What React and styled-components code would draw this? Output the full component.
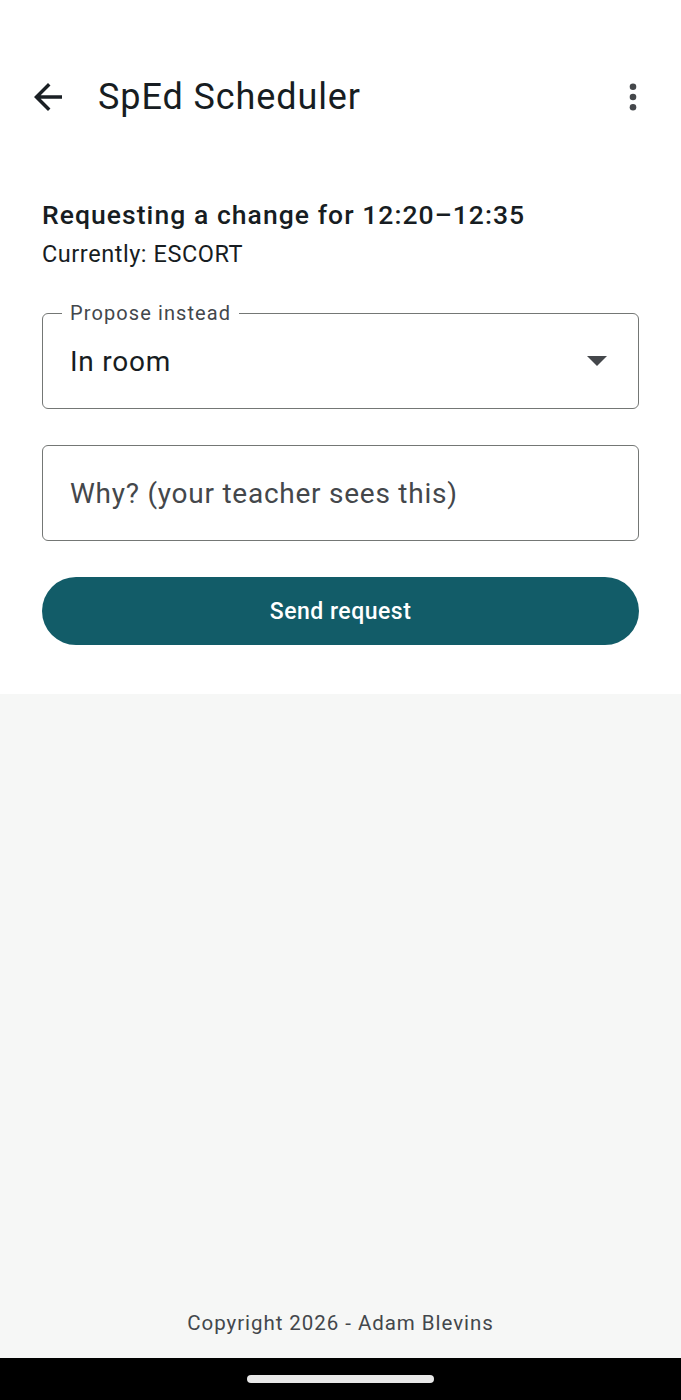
import React from "react";
import styled, { createGlobalStyle } from "styled-components";

const Global = createGlobalStyle`
  html, body { margin: 0; padding: 0; }
  body { font-family: Roboto, "Noto Sans", sans-serif; background: #fff; }
  * { box-sizing: border-box; }
`;

const Screen = styled.div`
  display: flex;
  flex-direction: column;
  height: 1400px;
  background: #ffffff;
`;

const StatusSpace = styled.div`
  height: 50px;
`;

const AppBar = styled.header`
  display: flex;
  align-items: center;
  height: 94px;
  padding: 0 26px 0 26px;
`;

const IconButton = styled.button`
  display: flex;
  align-items: center;
  justify-content: center;
  width: 44px;
  height: 44px;
  padding: 0;
  border: none;
  background: transparent;
  color: #1a1f24;
`;

const Title = styled.h1`
  flex: 1;
  margin: 0 0 0 28px;
  font-family: Roboto, sans-serif;
  font-weight: 400;
  font-size: 36px;
  color: #171d22;
  letter-spacing: 0.9px;
`;

const Content = styled.main`
  display: flex;
  flex-direction: column;
  padding: 55px 42px 49px 42px;
  background: #fff;
`;

const Heading = styled.h2`
  margin: 0;
  font-weight: 500;
  font-size: 26.5px;
  line-height: 32px;
  color: #171d22;
  letter-spacing: 1.05px;
`;

const Sub = styled.p`
  margin: 8px 0 0;
  font-size: 23.5px;
  line-height: 30px;
  color: #171d22;
  letter-spacing: 0.55px;
`;

const Field = styled.div`
  position: relative;
  margin-top: ${(p) => p.$mt}px;
  padding: 0 31px 0 27px;
  height: 96px;
  border: 1.5px solid #747775;
  border-radius: 6px;
  display: flex;
  align-items: center;
`;

const FloatLabel = styled.span`
  position: absolute;
  left: 19px;
  top: -12px;
  padding: 0 8px;
  background: #fff;
  font-size: 20px;
  line-height: 22px;
  color: #43474c;
  letter-spacing: 1.1px;
`;

const Value = styled.span`
  flex: 1;
  font-size: 28px;
  letter-spacing: 0.75px;
  color: ${(p) => (p.$placeholder ? "#44474b" : "#171d22")};
`;

const Caret = styled.span`
  width: 0;
  height: 0;
  border-left: 10px solid transparent;
  border-right: 10px solid transparent;
  border-top: 10px solid #44474b;
`;

const SendButton = styled.button`
  margin-top: 36px;
  height: 68px;
  border: none;
  border-radius: 34px;
  background: #125c68;
  color: #ffffff;
  font-family: Roboto, sans-serif;
  font-weight: 500;
  font-size: 23px;
  letter-spacing: 0.5px;
`;

const Lower = styled.div`
  flex: 1;
  display: flex;
  flex-direction: column;
  justify-content: flex-end;
  align-items: center;
  background: #f6f7f6;
  padding-bottom: 22px;
`;

const Footer = styled.footer`
  font-size: 20.5px;
  line-height: 26px;
  color: #43474c;
  letter-spacing: 0.95px;
`;

const NavBar = styled.div`
  height: 42px;
  background: #000;
  display: flex;
  align-items: center;
  justify-content: center;
`;

const Pill = styled.div`
  width: 187px;
  height: 8px;
  border-radius: 4px;
  background: #e8e8e8;
`;

export default function App() {
  return (
    <>
      <Global />
      <Screen>
        <StatusSpace />
        <AppBar>
          <IconButton aria-label="Back">
            <svg width="42" height="42" viewBox="0 0 24 24">
              <path d="M20 11H7.83l5.59-5.59L12 4l-8 8 8 8 1.41-1.41L7.83 13H20v-2z" fill="currentColor" />
            </svg>
          </IconButton>
          <Title>SpEd Scheduler</Title>
          <IconButton aria-label="More">
            <svg width="36" height="36" viewBox="0 0 24 24">
              <circle cx="12" cy="5.2" r="2.2" fill="#44474b" />
              <circle cx="12" cy="12" r="2.2" fill="#44474b" />
              <circle cx="12" cy="18.8" r="2.2" fill="#44474b" />
            </svg>
          </IconButton>
        </AppBar>
        <Content>
          <Heading>Requesting a change for 12:20–12:35</Heading>
          <Sub>Currently: ESCORT</Sub>
          <Field $mt={44}>
            <FloatLabel>Propose instead</FloatLabel>
            <Value>In room</Value>
            <Caret />
          </Field>
          <Field $mt={36}>
            <Value $placeholder>Why? (your teacher sees this)</Value>
          </Field>
          <SendButton>Send request</SendButton>
        </Content>
        <Lower>
          <Footer>Copyright 2026 - Adam Blevins</Footer>
        </Lower>
        <NavBar>
          <Pill />
        </NavBar>
      </Screen>
    </>
  );
}
